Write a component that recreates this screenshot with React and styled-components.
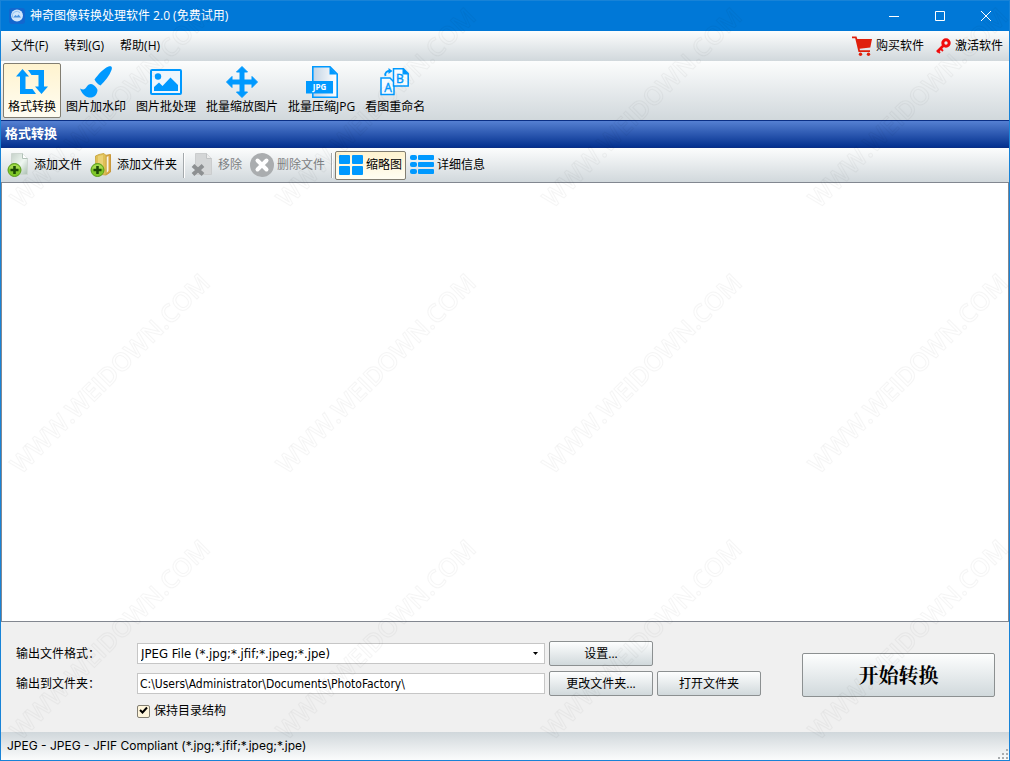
import React, { useState } from 'react'
import styled, { createGlobalStyle, css } from 'styled-components'

const BLUE = '#0099ff'

export default function App() {
	const [tool, setTool] = useState('convert')
	const [view, setView] = useState('thumbs')
	const [keepTree, setKeepTree] = useState(true)
	const [folder, setFolder] = useState('C:\\Users\\Administrator\\Documents\\PhotoFactory\\')

	return (
		<>
			<GlobalStyle />
			<WindowX>
				<TitleBar>
					<AppIcon />
					<Title>神奇图像转换处理软件 2.0 (免费试用)</Title>
					<TitleButton aria-label="最小化"><WinIcon d="M0 5.5H10" /></TitleButton>
					<TitleButton aria-label="最大化"><WinIcon d="M0.5 0.5H9.5V9.5H0.5Z" /></TitleButton>
					<TitleButton aria-label="关闭"><WinIcon d="M0 0L10 10M10 0L0 10" /></TitleButton>
				</TitleBar>

				<MenuBar>
					<MenuItem>文件(F)</MenuItem>
					<MenuItem>转到(G)</MenuItem>
					<MenuItem>帮助(H)</MenuItem>
					<Spacer />
					<MenuLink href="#buy"><CartIcon />购买软件</MenuLink>
					<MenuLink href="#activate"><KeyIcon />激活软件</MenuLink>
				</MenuBar>

				<ToolBar>
					{tools.map(({ id, label, Icon }) => (
						<ToolButton key={id} $active={tool === id} onClick={() => setTool(id)}>
							<Icon />
							<span>{label}</span>
						</ToolButton>
					))}
				</ToolBar>

				<Heading>格式转换</Heading>

				<ActionBar>
					<ActionButton><AddFileIcon />添加文件</ActionButton>
					<ActionButton><AddFolderIcon />添加文件夹</ActionButton>
					<Separator />
					<ActionButton disabled><RemoveIcon />移除</ActionButton>
					<ActionButton disabled><DeleteIcon />删除文件</ActionButton>
					<Separator />
					<ActionButton $active={view === 'thumbs'} onClick={() => setView('thumbs')}><ThumbsIcon />缩略图</ActionButton>
					<ActionButton $active={view === 'details'} onClick={() => setView('details')}><DetailsIcon />详细信息</ActionButton>
				</ActionBar>

				<FileArea />

				<OutputPanel>
					<OutputForm>
						<FormRow>
							<FieldLabel htmlFor="format">输出文件格式：</FieldLabel>
							<SelectWrap>
								<FormatSelect id="format">
									<option>JPEG File (*.jpg;*.jfif;*.jpeg;*.jpe)</option>
								</FormatSelect>
								<SelectArrow width="5" height="3" viewBox="0 0 5 3"><path d="M0 0H5L2.5 3Z" fill="#000" /></SelectArrow>
							</SelectWrap>
							<PushButton>设置...</PushButton>
							<ButtonGap />
						</FormRow>
						<FormRow>
							<FieldLabel htmlFor="folder">输出到文件夹：</FieldLabel>
							<FolderInput id="folder" value={folder} onChange={e => setFolder(e.target.value)} />
							<PushButton>更改文件夹...</PushButton>
							<PushButton>打开文件夹</PushButton>
						</FormRow>
						<CheckLabel>
							<CheckBox type="checkbox" checked={keepTree} onChange={e => setKeepTree(e.target.checked)} />
							{keepTree && <CheckMark width="9" height="9" viewBox="0 0 9 9"><path d="M1 4L3.5 6.5L8 1.5" /></CheckMark>}
							保持目录结构
						</CheckLabel>
					</OutputForm>
					<StartButton>开始转换</StartButton>
				</OutputPanel>

				<StatusBar>
					<span>JPEG - JPEG - JFIF Compliant (*.jpg;*.jfif;*.jpeg;*.jpe)</span>
					<Grip />
				</StatusBar>

				<Watermark aria-hidden="true">
					<defs>
						<pattern id="mark" width="266" height="266" patternUnits="userSpaceOnUse">
							<text x="20" y="208" transform="rotate(-45 20 208)">WWW.WEIDOWN.COM</text>
						</pattern>
					</defs>
					<rect width="100%" height="100%" fill="url(#mark)" />
				</Watermark>
			</WindowX>
		</>
	)
}

/* icons */

const WinIcon = ({ d }) => (
	<svg width="10" height="10" viewBox="0 0 10 10" fill="none" stroke="#fff"><path d={d} /></svg>
)

const AppIcon = () => (
	<svg width="16" height="16" viewBox="0 0 16 16">
		<rect width="16" height="16" rx="3" fill="#1267cf" />
		<circle cx="8" cy="7.5" r="6" fill="#cfe6fb" />
		<path d="M3.5 9.5A4.6 4.6 0 0 1 11 4.6" stroke="#8fc0ef" fill="none" />
		<path d="M4 9.5L6.5 7L8 8.2L9.5 6.5L12 9.5Z" fill="#4a94e0" />
	</svg>
)

const CartIcon = () => (
	<svg width="20" height="20" viewBox="0 0 20 20">
		<path d="M0 0.5H4.5L5.3 3H20L18.3 11.5L7.5 12.8L8 14.2H18V16H6.5L3.2 2.3H0Z" fill="#e0200c" />
		<circle cx="8.5" cy="18.2" r="1.7" fill="#e0200c" />
		<circle cx="16.5" cy="18.2" r="1.7" fill="#e0200c" />
	</svg>
)

const KeyIcon = () => (
	<svg width="15" height="16" viewBox="0 0 15 16" fill="none" stroke="#f00c0c">
		<circle cx="10" cy="5" r="3.2" strokeWidth="3" />
		<path d="M7.5 7.5L1 14" strokeWidth="2.6" />
		<path d="M4.5 10.5L7 13M2 13L4 15" strokeWidth="1.8" />
	</svg>
)

const ConvertIcon = () => (
	<svg width="32" height="32" viewBox="0 0 32 32" fill={BLUE}>
		<path d="M6.5 3L13 10.5H9.5V23H16.5L20 28H4V10.5H0Z" />
		<path d="M12 4H28V20.5H32L25.5 28L19 20.5H22.5V9H15.5Z" />
	</svg>
)

const BrushIcon = () => (
	<svg width="34" height="32" viewBox="0 0 34 32" fill={BLUE}>
		<path d="M29.5 0.5C32.5 -0.5 33.5 1 32.5 4C30.5 10 26 15 21.5 19.5C19 18.5 16.5 16 15.5 13.5C19.5 8.5 23.5 3 29.5 0.5Z" />
		<path d="M12 18C14 18 18 21.5 18.5 24C18.5 27 17 29 15.5 30.3C11.5 33 4.5 32 1 22.5C4 24 6 23.8 7.5 21C8.8 19 10 18 12 18Z" />
	</svg>
)

const PictureIcon = () => (
	<svg width="32" height="32" viewBox="0 0 32 32" fill={BLUE}>
		<rect x="1" y="4" width="30" height="24" rx="1" fill="#eef6fc" stroke={BLUE} strokeWidth="2" />
		<circle cx="8" cy="10.5" r="3.2" />
		<path d="M4 25V21L9 16.5L12.5 20L20.5 11.5L28 19V25Z" />
	</svg>
)

const MoveIcon = () => (
	<svg width="32" height="32" viewBox="0 0 32 32" fill={BLUE}>
		<path d="M16 0.5L21.5 6H18V14H26V10.5L31.5 16L26 21.5V18H18V26H21.5L16 31.5L10.5 26H14V18H6V21.5L0.5 16L6 10.5V14H14V6H10.5Z" stroke={BLUE} strokeWidth="1" strokeLinejoin="round" />
	</svg>
)

const JpgIcon = () => (
	<svg width="32" height="32" viewBox="0 0 32 32">
		<defs>
			<linearGradient id="sheet" x2="1">
				<stop offset="0" stopColor="#c2d3e4" />
				<stop offset="1" stopColor="#fff" />
			</linearGradient>
		</defs>
		<path d="M6.8 0.8H24L31.2 8V31.2H6.8Z" fill="url(#sheet)" stroke={BLUE} strokeWidth="1.6" />
		<path d="M23.5 1V8.5H31Z" fill={BLUE} />
		<rect y="15" width="27" height="12.5" fill={BLUE} />
		<text x="13.5" y="24" fontSize="8" fontWeight="bold" textAnchor="middle" fill="#fff">JPG</text>
	</svg>
)

const RenameIcon = () => (
	<svg width="30" height="32" viewBox="0 0 30 32" fill="none" stroke={BLUE} strokeWidth="1.5">
		<path d="M1 12H10L14 16V28.5H1Z" fill="#f8fcff" />
		<path d="M13.5 2.8H23.5L28.2 7.5V20H13.5Z" fill="#f8fcff" />
		<path d="M23 3V8H28Z" fill={BLUE} strokeWidth="1" />
		<path d="M5.5 10C4.5 6.5 7 5 10 5" strokeWidth="1.8" />
		<path d="M8.5 2L12.5 5L8.5 8Z" fill={BLUE} stroke="none" />
		<text x="8" y="26" fontSize="12" textAnchor="middle" fill={BLUE} strokeWidth="0.4">A</text>
		<text x="20" y="17" fontSize="12" textAnchor="middle" fill={BLUE} strokeWidth="0.4">B</text>
	</svg>
)

const PlusBadge = () => (
	<>
		<circle cx="7.5" cy="17" r="6.5" fill="#80c828" stroke="#5a9a1c" />
		<path d="M2 15.5A5.8 5.8 0 0 1 13 15.5A12 8 0 0 1 2 15.5Z" fill="#b4e35f" opacity="0.7" />
		<path d="M7.5 13V21M3.5 17H11.5" stroke="#1d4a05" strokeWidth="2.6" />
	</>
)

const AddFileIcon = () => (
	<svg width="24" height="24" viewBox="0 0 24 24">
		<defs>
			<linearGradient id="paper" x2="1" y2="1">
				<stop offset="0" stopColor="#c6d2ca" />
				<stop offset="0.55" stopColor="#eef6f0" />
				<stop offset="1" stopColor="#a9bdb0" />
			</linearGradient>
		</defs>
		<path d="M4.5 0.5H15.5L20.5 5.5V21.5H4.5Z" fill="url(#paper)" stroke="#cdd6d0" />
		<path d="M15.5 0.5V5.5H20.5" fill="#fff" stroke="#b2c2b8" />
		<PlusBadge />
	</svg>
)

const AddFolderIcon = () => (
	<svg width="24" height="24" viewBox="0 0 24 24">
		<path d="M15 2.5L20.5 1.5V19L16 22Z" fill="#dba640" stroke="#c9983c" />
		<path d="M16.5 4L18.5 3V18L16.5 20Z" fill="#f8f4e8" />
		<path d="M5.5 3L9 1.5L14 0.5L16 2.5V22L6 21Z" fill="#e0c056" stroke="#ccab49" />
		<path d="M8 3L13 2V20H8Z" fill="#eed984" opacity="0.7" />
		<PlusBadge />
	</svg>
)

const RemoveIcon = () => (
	<svg width="24" height="24" viewBox="0 0 24 24">
		<path d="M4.5 0.5H15.5L20.5 5.5V21.5H4.5Z" fill="#d4d6d7" stroke="#cbcdce" />
		<path d="M15.5 0.5V5.5H20.5" fill="#ececec" stroke="#c0c3c4" />
		<path d="M2 12.5L12 21.5M12 12.5L2 21.5" stroke="#8d9092" strokeWidth="4" />
	</svg>
)

const DeleteIcon = () => (
	<svg width="24" height="24" viewBox="0 0 24 24">
		<circle cx="12" cy="12" r="12" fill="#aaadaf" />
		<path d="M7.5 7.5L16.5 16.5M16.5 7.5L7.5 16.5" stroke="#fff" strokeWidth="4" strokeLinecap="round" />
	</svg>
)

const ThumbsIcon = () => (
	<svg width="24" height="24" viewBox="0 0 24 24" fill={BLUE}>
		<rect y="2" width="11" height="9" rx="1" />
		<rect x="13" y="2" width="11" height="9" rx="1" />
		<rect y="13" width="11" height="9" rx="1" />
		<rect x="13" y="13" width="11" height="9" rx="1" />
	</svg>
)

const DetailsIcon = () => (
	<svg width="24" height="24" viewBox="0 0 24 24" fill={BLUE}>
		{[2, 9, 16].map(y => (
			<g key={y}>
				<rect y={y} width="7" height="5" rx="2" />
				<rect x="8" y={y} width="16" height="5" rx="1" />
			</g>
		))}
	</svg>
)

const Grip = () => (
	<svg width="12" height="12" viewBox="0 0 12 12" fill="#a9adaf">
		<path d="M9 1h2v2h-2zM5 5h2v2h-2zM9 5h2v2h-2zM1 9h2v2h-2zM5 9h2v2h-2zM9 9h2v2h-2z" />
	</svg>
)

const tools = [
	{ id: 'convert', label: '格式转换', Icon: ConvertIcon },
	{ id: 'watermark', label: '图片加水印', Icon: BrushIcon },
	{ id: 'batch', label: '图片批处理', Icon: PictureIcon },
	{ id: 'resize', label: '批量缩放图片', Icon: MoveIcon },
	{ id: 'compress', label: '批量压缩JPG', Icon: JpgIcon },
	{ id: 'rename', label: '看图重命名', Icon: RenameIcon },
]

/* styles */

const GlobalStyle = createGlobalStyle`
	* { box-sizing: border-box; }
	body {
		margin: 0;
		color: #000;
		font: 12px/16px "Open Sans", "Noto Sans CJK SC", sans-serif;
	}
	button, input, select { font: inherit; color: inherit; }
	svg { flex: none; }
`

const WindowX = styled.div`
	position: relative;
	display: flex;
	flex-direction: column;
	min-height: 100vh;
	border: 1px solid #1883d7;
	background: #f0f0f0;
`

const TitleBar = styled.header`
	display: flex;
	align-items: center;
	height: 30px;
	padding-left: 8px;
	background: #0078d7;
	color: #fff;
`

const Title = styled.span`
	flex: 1;
	padding-left: 5px;
`

const TitleButton = styled.button`
	display: flex;
	align-items: center;
	justify-content: center;
	width: 46px;
	height: 30px;
	padding: 0;
	border: 0;
	background: none;
`

const barFill = css`
	background: linear-gradient(#fcfdfd, #d1d8dc);
`

const MenuBar = styled.nav`
	display: flex;
	align-items: center;
	height: 30px;
	padding: 0 6px 0 2px;
	${barFill}
`

const MenuItem = styled.button`
	padding: 0 8px;
	border: 0;
	background: none;
`

const Spacer = styled.div`
	flex: 1;
`

const MenuLink = styled.a`
	display: flex;
	align-items: center;
	gap: 4px;
	margin-left: 12px;
	color: inherit;
	text-decoration: none;
`

const ToolBar = styled.div`
	display: flex;
	padding: 2px;
	${barFill}
`

const activeFill = css`
	border-color: #827e72;
	background: linear-gradient(#fff3cf, #fffdf2);
`

const ToolButton = styled.button`
	display: flex;
	flex-direction: column;
	align-items: center;
	gap: 1px;
	height: 55px;
	padding: 2px 4px 0;
	border: 1px solid transparent;
	border-radius: 2px;
	background: none;
	white-space: nowrap;
	${p => p.$active && activeFill}
`

const Heading = styled.h1`
	height: 28px;
	margin: 0;
	padding: 0 4px;
	border: 1px solid #0a2f85;
	border-width: 1px 0;
	background: linear-gradient(#5580d2, #04318f);
	color: #fff;
	font-size: 13px;
	line-height: 24px;
`

const ActionBar = styled.div`
	display: flex;
	align-items: center;
	height: 34px;
	padding: 0 2px;
	${barFill}
`

const ActionButton = styled.button`
	display: flex;
	align-items: center;
	gap: 3px;
	height: 29px;
	padding: 0 3px;
	border: 1px solid transparent;
	border-radius: 2px;
	background: none;
	white-space: nowrap;
	${p => p.$active && activeFill}

	&:disabled {
		color: #7d8082;
	}
`

const Separator = styled.div`
	width: 2px;
	height: 25px;
	margin: 0 2px;
	border-left: 1px solid #a4a9ac;
	border-right: 1px solid #fff;
`

const FileArea = styled.main`
	flex: 1;
	border: 1px solid #828790;
	background: #fff;
`

const OutputPanel = styled.section`
	display: flex;
	gap: 41px;
	padding: 19px 14px 11px 15px;
`

const OutputForm = styled.div`
	display: flex;
	flex: 1;
	flex-direction: column;
	gap: 5px;
`

const FormRow = styled.div`
	display: flex;
	align-items: center;
	gap: 4px;
`

const FieldLabel = styled.label`
	width: 117px;
`

const SelectWrap = styled.div`
	position: relative;
	display: flex;
	flex: 1;
`

const field = css`
	flex: 1;
	min-width: 0;
	height: 21px;
	border: 1px solid #c6c6c6;
	border-radius: 0;
	background: #fff;
	font-family: "DejaVu Sans Condensed", "Noto Sans CJK SC", sans-serif;
`

const FormatSelect = styled.select`
	${field}
	appearance: none;
	padding: 0 3px;
	font-size: 13px;
`

const SelectArrow = styled.svg`
	position: absolute;
	top: 9px;
	right: 7px;
	pointer-events: none;
`

const FolderInput = styled.input`
	${field}
	padding: 0 2px;
`

const PushButton = styled.button`
	width: 104px;
	height: 25px;
	padding: 0;
	border: 1px solid #8c9091;
	border-radius: 2px;
	background: linear-gradient(#fdfefe, #d1d9dc);
`

const ButtonGap = styled.div`
	width: 104px;
`

const StartButton = styled(PushButton)`
	width: 193px;
	height: 44px;
	margin-top: 12px;
	font-family: "Noto Serif CJK SC", "Noto Sans CJK SC", serif;
	font-size: 20px;
	font-weight: bold;
`

const CheckLabel = styled.label`
	position: relative;
	display: flex;
	align-items: center;
	align-self: flex-start;
	gap: 4px;
	height: 20px;
	margin-left: 121px;
`

const CheckBox = styled.input`
	appearance: none;
	width: 13px;
	height: 13px;
	margin: 0;
	border: 1px solid #827e72;
	border-radius: 2px;
	background: #fff6dc;
`

const CheckMark = styled.svg`
	position: absolute;
	top: 5px;
	left: 2px;
	fill: none;
	stroke: #000;
	stroke-width: 2;
	pointer-events: none;
`

const StatusBar = styled.footer`
	display: flex;
	align-items: center;
	justify-content: space-between;
	height: 28px;
	padding-left: 6px;
	background: linear-gradient(#d0d7db, #fbfcfc);
	font-family: Inter, "Noto Sans CJK SC", sans-serif;

	svg { align-self: flex-end; }
`

const Watermark = styled.svg`
	position: absolute;
	inset: 0;
	width: 100%;
	height: 100%;
	pointer-events: none;

	text {
		fill: none;
		stroke: #000;
		stroke-opacity: 0.04;
		font-family: "Open Sans", sans-serif;
		font-size: 25px;
		font-weight: 600;
	}
`
